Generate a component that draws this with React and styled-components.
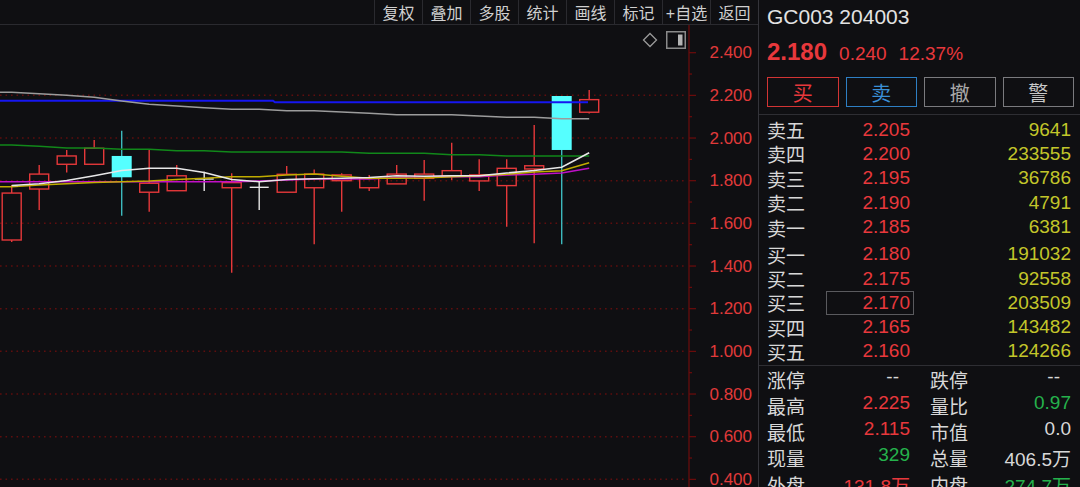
import React from 'react'
import styled, { createGlobalStyle } from 'styled-components'

const GlobalStyle = createGlobalStyle`
  html, body {
    margin: 0;
    padding: 0;
    background: #0f0f12;
  }
  body {
    font-family: "Liberation Sans", "Noto Sans CJK SC", sans-serif;
  }
`

const RED = '#e8383c'
const GREEN = '#25b24c'
const TEXT = '#d8d8d8'

const Screen = styled.div`
  display: flex;
  width: 1080px;
  height: 487px;
  overflow: hidden;
  background: #0f0f12;
`

const ChartPane = styled.div`
  position: relative;
  display: flex;
  flex-direction: column;
  flex: none;
  width: 758px;
  border-right: 1px solid #34343a;
`

const Toolbar = styled.div`
  display: flex;
  justify-content: flex-end;
  height: 24px;
  border-bottom: 1px solid #2a2a2f;
`

const ToolButton = styled.div`
  display: flex;
  align-items: center;
  justify-content: center;
  width: 47px;
  border-left: 1px solid #2a2a2f;
  color: #d0d0d0;
  font-size: 16px;
  white-space: nowrap;
`

const ChartTools = styled.div`
  position: absolute;
  top: 31px;
  right: 72px;
  display: flex;
  align-items: center;
  gap: 8px;
`

const ChartCanvas = styled.svg`
  display: block;
`

const SidePanel = styled.div`
  display: flex;
  flex-direction: column;
  flex: 1;
  min-width: 0;
`

const Title = styled.div`
  height: 34px;
  line-height: 34px;
  padding-left: 8px;
  font-size: 21px;
  color: #e2e2e2;
`

const QuoteRow = styled.div`
  display: flex;
  align-items: baseline;
  gap: 12px;
  height: 36px;
  line-height: 36px;
  padding-left: 8px;
  color: ${RED};
`

const LastPrice = styled.span`
  font-size: 24px;
  font-weight: bold;
`

const Change = styled.span`
  font-size: 19px;
`

const ActionBar = styled.div`
  display: grid;
  grid-template-columns: repeat(4, 1fr);
  gap: 7px;
  padding: 7px 6px 7px 8px;
  border-bottom: 1px solid #2e2e33;
`

const ActionButton = styled.div`
  display: flex;
  align-items: center;
  justify-content: center;
  height: 30px;
  box-sizing: border-box;
  border: 1px solid ${p => p.$border};
  color: ${p => p.$color};
  font-size: 20px;
`

const Book = styled.div`
  padding: ${p => p.$pad};
  border-bottom: ${p => (p.$line ? '1px solid #2e2e33' : 'none')};
`

const BookRow = styled.div`
  display: grid;
  grid-template-columns: 59px 88px 1fr;
  align-items: center;
  height: ${p => p.$h}px;
  font-size: 19px;
`

const Level = styled.span`
  color: ${TEXT};
`

const Price = styled.span`
  height: 24px;
  line-height: 22px;
  box-sizing: border-box;
  padding-right: 3px;
  border: 1px solid ${p => (p.$boxed ? '#5a5a5e' : 'transparent')};
  color: ${RED};
  text-align: right;
`

const Volume = styled.span`
  color: #c3c62a;
  text-align: right;
`

const RatioBar = styled.div`
  display: flex;
  height: 2px;
`

const RatioPart = styled.div`
  flex: ${p => p.$grow};
  background: ${p => p.$color};
`

const Stats = styled.div`
  padding: 0 9px 0 8px;
  font-size: 19px;
`

const StatRow = styled.div`
  display: grid;
  grid-template-columns: 143px 1fr;
  column-gap: 20px;
  align-items: center;
  height: 26.2px;
`

const StatPair = styled.div`
  display: flex;
  justify-content: space-between;
`

const StatLabel = styled.span`
  color: ${TEXT};
`

const StatValue = styled.span`
  padding-right: ${p => (p.$dash ? '11px' : '0')};
  color: ${p => p.$color || TEXT};
`

const tools = ['复权', '叠加', '多股', '统计', '画线', '标记', '+自选', '返回']

// chart geometry (svg starts below the toolbar)
const W = 758
const H = 462
const AXIS_X = 689
const yOf = p => 27.7 + (2.4 - p) * 213.33
const xOf = i => 11.7 + i * 27.5
const levels = [2.4, 2.2, 2.0, 1.8, 1.6, 1.4, 1.2, 1.0, 0.8, 0.6, 0.4]

// open, high, low, close
const candles = [
  [1.522, 1.78, 1.513, 1.742],
  [1.761, 1.874, 1.663, 1.831],
  [1.877, 1.944, 1.839, 1.916],
  [1.877, 1.991, 1.877, 1.952],
  [1.916, 2.034, 1.636, 1.816],
  [1.746, 1.947, 1.655, 1.788],
  [1.753, 1.874, 1.753, 1.823],
  [1.808, 1.842, 1.752, 1.808],
  [1.767, 1.835, 1.369, 1.791],
  [1.769, 1.795, 1.663, 1.769],
  [1.746, 1.869, 1.746, 1.83],
  [1.767, 1.853, 1.502, 1.831],
  [1.8, 1.835, 1.655, 1.827],
  [1.767, 1.827, 1.752, 1.811],
  [1.785, 1.874, 1.785, 1.831],
  [1.811, 1.897, 1.706, 1.831],
  [1.822, 1.978, 1.803, 1.847],
  [1.799, 1.9, 1.752, 1.827],
  [1.777, 1.9, 1.584, 1.858],
  [1.855, 2.061, 1.507, 1.87],
  [2.197, 2.197, 1.502, 1.944],
  [2.121, 2.225, 2.115, 2.18],
]

// moving averages, page y in px per candle
const averages = [
  { color: '#9c9c9c', fromEdge: true, ys: [92.3, 93.7, 95.3, 97.3, 101, 104.3, 106, 107.7, 109.3, 109.3, 110.7, 110.7, 112, 113.3, 114.7, 114.7, 114.7, 116, 117.3, 117.3, 118.7, 118.7] },
  { color: '#11881a', fromEdge: true, ys: [145, 146.3, 148, 148, 149.3, 149.3, 150.7, 150.7, 152, 152, 152, 152, 152, 153.3, 153.3, 153.3, 154.7, 154.7, 156, 156, 156, 156] },
  { color: '#c010c8', fromEdge: true, ys: [181.7, 181.7, 181.7, 181.7, 181.7, 181.7, 181.7, 181.7, 181.7, 181, 180, 179, 179, 179, 177.5, 176.7, 176.7, 176.7, 175, 174.3, 173, 168.3] },
  { color: '#c0ac00', fromEdge: true, ys: [186.7, 185, 183.7, 182.5, 181.7, 181, 179.5, 178.3, 176.7, 176.7, 175, 174, 176.3, 178.3, 178.3, 178, 176.7, 175.7, 174.3, 172, 170.7, 162.7] },
  { color: '#e8e8e8', fromEdge: false, ys: [185.5, 183.7, 180.5, 175.7, 170.5, 168.3, 168.3, 172.5, 179.5, 181.7, 179.5, 178.8, 178.3, 177.5, 175.7, 176.3, 175.7, 175.7, 173, 170.5, 167.3, 152.7] },
]

function maPoints({ ys, fromEdge }) {
  const pts = ys.map((y, i) => `${xOf(i)},${y - 25}`)
  if (fromEdge) pts.unshift(`0,${ys[0] - 25}`)
  else pts.unshift(`18,${ys[0] - 25}`)
  return pts.join(' ')
}

function Candle({ c, i }) {
  const [open, high, low, close] = c
  const x = xOf(i)
  const top = yOf(Math.max(open, close))
  const bottom = yOf(Math.min(open, close))
  if (close > open) {
    return (
      <g stroke="#e5383a" strokeWidth="1.4" fill="none">
        <line x1={x} x2={x} y1={yOf(high)} y2={top} />
        <line x1={x} x2={x} y1={bottom} y2={yOf(low)} />
        <rect x={x - 9.5} y={top} width={19} height={bottom - top} />
      </g>
    )
  }
  if (close < open) {
    return (
      <g>
        <line x1={x} x2={x} y1={yOf(high)} y2={yOf(low)} stroke="#3cb9bd" strokeWidth="1.4" />
        <rect x={x - 10} y={top} width={20} height={bottom - top} fill="#55ffff" />
      </g>
    )
  }
  return (
    <g stroke="#e6e6e6" strokeWidth="1.4">
      <line x1={x} x2={x} y1={yOf(high)} y2={yOf(low)} />
      <line x1={x - 9.5} x2={x + 9.5} y1={top} y2={top} />
    </g>
  )
}

function PriceChart() {
  return (
    <ChartCanvas width={W} height={H}>
      {levels.slice(1).map(p => (
        <line key={p} x1="0" x2={AXIS_X - 2} y1={yOf(p)} y2={yOf(p)} stroke="#5e0e0e" strokeWidth="1.5" strokeDasharray="1.6 3.9" />
      ))}
      {candles.map((c, i) => (
        <Candle key={i} c={c} i={i} />
      ))}
      <polyline points="0,75.7 273,75.7 275,77.3 588,77.3" fill="none" stroke="#1616f0" strokeWidth="2" />
      {averages.map(ma => (
        <polyline key={ma.color} points={maPoints(ma)} fill="none" stroke={ma.color} strokeWidth="1.6" />
      ))}
      <line x1={AXIS_X} x2={AXIS_X} y1="0" y2={H} stroke="#6e0c0c" strokeWidth="1.2" />
      {levels.map(p => (
        <g key={p}>
          <line x1={AXIS_X} x2={AXIS_X + 7} y1={yOf(p)} y2={yOf(p)} stroke="#6e0c0c" strokeWidth="1.2" />
          <line x1={AXIS_X} x2={AXIS_X + 3} y1={yOf(p - 0.1)} y2={yOf(p - 0.1)} stroke="#6e0c0c" strokeWidth="1.2" />
          <text x="752" y={yOf(p)} textAnchor="end" dominantBaseline="central" fill="#e03a3a" fontSize="17" fontFamily="Liberation Sans, sans-serif">
            {p.toFixed(3)}
          </text>
        </g>
      ))}
    </ChartCanvas>
  )
}

const sells = [
  ['卖五', '2.205', '9641'],
  ['卖四', '2.200', '233555'],
  ['卖三', '2.195', '36786'],
  ['卖二', '2.190', '4791'],
  ['卖一', '2.185', '6381'],
]

const buys = [
  ['买一', '2.180', '191032'],
  ['买二', '2.175', '92558'],
  ['买三', '2.170', '203509', true],
  ['买四', '2.165', '143482'],
  ['买五', '2.160', '124266'],
]

const stats = [
  [['涨停', '--', null, true], ['跌停', '--', null, true]],
  [['最高', '2.225', RED], ['量比', '0.97', GREEN]],
  [['最低', '2.115', RED], ['市值', '0.0']],
  [['现量', '329', GREEN], ['总量', '406.5万']],
  [['外盘', '131.8万', RED], ['内盘', '274.7万', GREEN]],
]

export default function App() {
  return (
    <Screen>
      <GlobalStyle />
      <ChartPane>
        <Toolbar>
          {tools.map(t => (
            <ToolButton key={t}>{t}</ToolButton>
          ))}
        </Toolbar>
        <PriceChart />
        <ChartTools>
          <svg width="16" height="16" viewBox="0 0 16 16">
            <polygon points="8,1.5 14.5,8 8,14.5 1.5,8" fill="none" stroke="#9a9a9a" strokeWidth="1.3" />
          </svg>
          <svg width="20" height="18" viewBox="0 0 20 18">
            <rect x="0.75" y="0.75" width="18.5" height="16.5" fill="none" stroke="#8a8a8a" strokeWidth="1.5" />
            <rect x="12" y="3.5" width="4.5" height="11" fill="#b4b4b4" />
          </svg>
        </ChartTools>
      </ChartPane>

      <SidePanel>
        <Title>GC003 204003</Title>
        <QuoteRow>
          <LastPrice>2.180</LastPrice>
          <Change>0.240</Change>
          <Change>12.37%</Change>
        </QuoteRow>
        <ActionBar>
          <ActionButton $border="#d23434" $color="#e8383c">买</ActionButton>
          <ActionButton $border="#2e7fc4" $color="#3a8fd6">卖</ActionButton>
          <ActionButton $border="#7a7a7e" $color="#a8a8a8">撤</ActionButton>
          <ActionButton $border="#7a7a7e" $color="#c8c8c8">警</ActionButton>
        </ActionBar>

        <Book $pad="1px 9px 0 8px">
          {sells.map(([label, price, vol]) => (
            <BookRow key={label} $h={24.4}>
              <Level>{label}</Level>
              <Price>{price}</Price>
              <Volume>{vol}</Volume>
            </BookRow>
          ))}
        </Book>
        <RatioBar>
          <RatioPart $grow={230} $color="#b8862e" />
          <RatioPart $grow={91} $color="#2a6aa8" />
        </RatioBar>
        <Book $pad="3px 9px 3px 8px" $line>
          {buys.map(([label, price, vol, boxed]) => (
            <BookRow key={label} $h={24.2}>
              <Level>{label}</Level>
              <Price $boxed={boxed}>{price}</Price>
              <Volume>{vol}</Volume>
            </BookRow>
          ))}
        </Book>

        <Stats>
          {stats.map((row, r) => (
            <StatRow key={r}>
              {row.map(([label, value, color, dash]) => (
                <StatPair key={label}>
                  <StatLabel>{label}</StatLabel>
                  <StatValue $color={color} $dash={dash}>{value}</StatValue>
                </StatPair>
              ))}
            </StatRow>
          ))}
        </Stats>
      </SidePanel>
    </Screen>
  )
}
